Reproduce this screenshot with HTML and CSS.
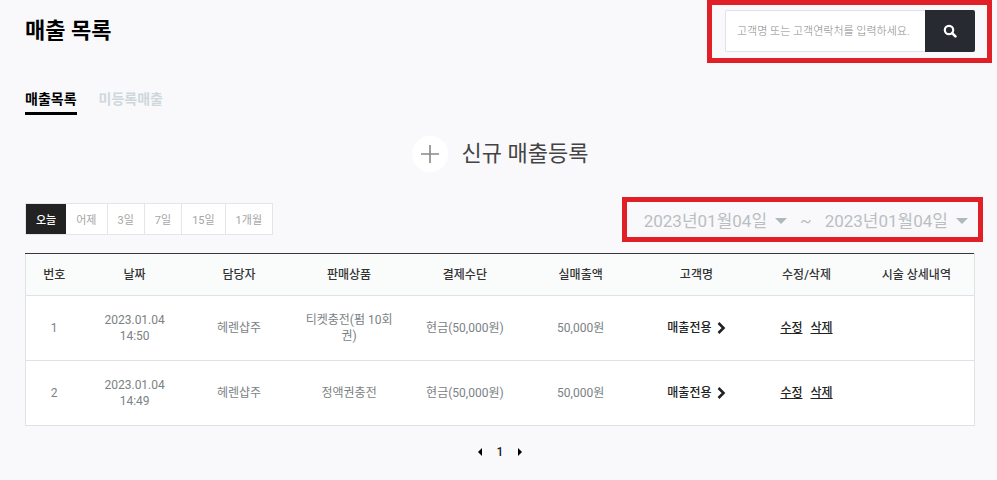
FILE: index.html
```html
<!DOCTYPE html>
<html lang="ko">
<head>
    <meta charset="UTF-8">
    <meta name="viewport" content="width=device-width, initial-scale=1.0">
    <title>매출 목록</title>
    <link rel="stylesheet" href="styles.css">
</head>
<body>
    <header class="page-header">
        <h1>매출 목록</h1>
        <form class="search marked">
            <input type="text" class="search-input" aria-label="고객 검색" placeholder="고객명 또는 고객연락처를 입력하세요.">
            <button type="button" class="search-btn" aria-label="검색">
                <svg width="14" height="14" viewBox="0 0 14 14"><circle cx="6" cy="6" r="4.2" fill="none" stroke="#fff" stroke-width="2.2"/><path d="M9.2 9.2L12.4 12.4" stroke="#fff" stroke-width="2.6" stroke-linecap="round"/></svg>
            </button>
        </form>
    </header>

    <nav class="tabs">
        <a href="#" class="tab active">매출목록</a>
        <a href="#" class="tab">미등록매출</a>
    </nav>

    <button type="button" class="new-sale">
        <span class="plus"><svg width="18" height="18" viewBox="0 0 18 18"><path d="M9 0V18M0 9H18" stroke="#888" stroke-width="1.6"/></svg></span>
        신규 매출등록
    </button>

    <div class="filters">
        <div class="ranges">
            <button type="button" class="range active">오늘</button>
            <button type="button" class="range">어제</button>
            <button type="button" class="range">3일</button>
            <button type="button" class="range">7일</button>
            <button type="button" class="range">15일</button>
            <button type="button" class="range">1개월</button>
        </div>
        <div class="dates marked">
            <button type="button" class="date">2023년01월04일 <span class="caret"></span></button>
            <span>~</span>
            <button type="button" class="date">2023년01월04일 <span class="caret"></span></button>
        </div>
    </div>

    <table class="sales">
        <colgroup>
            <col class="col-no">
            <col class="col-mid">
            <col class="col-mid">
            <col>
            <col>
            <col>
            <col>
            <col class="col-mid">
            <col>
        </colgroup>
        <thead>
            <tr>
                <th>번호</th>
                <th>날짜</th>
                <th>담당자</th>
                <th>판매상품</th>
                <th>결제수단</th>
                <th>실매출액</th>
                <th>고객명</th>
                <th>수정/삭제</th>
                <th>시술 상세내역</th>
            </tr>
        </thead>
        <tbody>
            <tr>
                <td>1</td>
                <td>2023.01.04<br>14:50</td>
                <td>헤렌샵주</td>
                <td>티켓충전(펌 10회권)</td>
                <td>현금(50,000원)</td>
                <td>50,000원</td>
                <td><a href="#" class="customer">매출전용 <svg width="9" height="12" viewBox="0 0 9 12"><path d="M1.5 1L6.5 6L1.5 11" fill="none" stroke="#222" stroke-width="2.6"/></svg></a></td>
                <td><div class="actions"><a href="#">수정</a><a href="#">삭제</a></div></td>
                <td></td>
            </tr>
            <tr>
                <td>2</td>
                <td>2023.01.04<br>14:49</td>
                <td>헤렌샵주</td>
                <td>정액권충전</td>
                <td>현금(50,000원)</td>
                <td>50,000원</td>
                <td><a href="#" class="customer">매출전용 <svg width="9" height="12" viewBox="0 0 9 12"><path d="M1.5 1L6.5 6L1.5 11" fill="none" stroke="#222" stroke-width="2.6"/></svg></a></td>
                <td><div class="actions"><a href="#">수정</a><a href="#">삭제</a></div></td>
                <td></td>
            </tr>
        </tbody>
    </table>

    <nav class="pagination">
        <a href="#" aria-label="이전"><svg width="4" height="8" viewBox="0 0 4 8"><path d="M4 0V8L0 4Z"/></svg></a>
        <a href="#">1</a>
        <a href="#" aria-label="다음"><svg width="4" height="8" viewBox="0 0 4 8"><path d="M0 0V8L4 4Z"/></svg></a>
    </nav>
</body>
</html>
```
FILE: styles.css
```css
* {
    box-sizing: border-box;
}
body {
    margin: 0;
    padding: 10px 22px 16px 25px;
    background: #f9f9fb;
    color: #222;
    font-family: Roboto, "Noto Sans CJK KR", sans-serif;
    font-size: 12px;
    line-height: 16px;
}
a {
    color: inherit;
    text-decoration: none;
}
button {
    padding: 0;
    border: none;
    background: none;
    color: inherit;
    font-family: inherit;
    cursor: pointer;
}
svg {
    display: block;
}
.page-header {
    display: flex;
    justify-content: space-between;
    align-items: center;
}
h1 {
    margin: 0;
    color: #000;
    font-size: 22px;
    line-height: 32px;
    font-weight: 700;
}
/* red highlight box around a control */
.marked {
    position: relative;
}
.marked::after {
    content: "";
    position: absolute;
    border: 5px solid #e01f26;
    pointer-events: none;
}
.search {
    display: flex;
    width: 250px;
    height: 42px;
}
.search::after {
    inset: -10px -17px -11px -18px;
}
.search-input {
    flex: 1;
    min-width: 0;
    padding: 0 11px;
    border: 1px solid #dfe2e6;
    border-right: none;
    border-radius: 2px 0 0 2px;
    background: #fff;
    font-family: inherit;
    font-size: 11px;
    font-weight: 300;
}
.search-input::placeholder {
    color: #888;
}
.search-btn {
    display: flex;
    justify-content: center;
    align-items: center;
    width: 50px;
    border-radius: 0 2px 2px 0;
    background: #272a31;
}
.tabs {
    display: flex;
    gap: 22px;
    margin-top: 35px;
}
.tab {
    height: 28px;
    color: #ced8db;
    font-size: 14px;
    line-height: 24px;
    font-weight: 700;
}
.tab.active {
    border-bottom: 3px solid #000;
    color: #000;
}
.new-sale {
    display: flex;
    align-items: center;
    gap: 14px;
    margin: 21px auto 0;
    color: #444;
    font-size: 22px;
    line-height: 36px;
    font-weight: 400;
}
.plus {
    display: flex;
    justify-content: center;
    align-items: center;
    width: 36px;
    height: 36px;
    border-radius: 50%;
    background: #fff;
}
.filters {
    display: flex;
    justify-content: space-between;
    align-items: center;
    margin-top: 31px;
}
.ranges {
    display: flex;
    height: 32px;
    border: 1px solid #e3e6e8;
    background: #fff;
}
.range {
    padding: 0 10px;
    border-right: 1px solid #e3e6e8;
    color: #a5a5a5;
    font-size: 11px;
}
.range:last-child {
    border-right: none;
}
.range.active {
    border-right: none;
    background: #222;
    color: #fff;
    font-weight: 500;
}
.dates {
    display: flex;
    align-items: center;
    gap: 13px;
    margin-top: 4px;
    margin-right: 7px;
    color: #b9bfc1;
    font-size: 17px;
}
.dates::after {
    inset: -12px -15px -9px -22px;
}
.date {
    display: flex;
    align-items: center;
    gap: 8px;
    font-size: 17px;
    line-height: 24px;
}
.caret {
    border: 6px solid transparent;
    border-top-color: #b0b8b9;
    border-bottom: none;
}
.sales {
    width: 100%;
    margin-top: 18px;
    border: 1px solid #dde3e6;
    border-top: 1px solid #34383c;
    border-collapse: collapse;
    table-layout: fixed;
    background: #fff;
    text-align: center;
}
.col-no {
    width: 6%;
}
.col-mid {
    width: 11%;
}
.sales th {
    height: 42px;
    padding: 0;
    background: #fafcfc;
    color: #333;
    font-weight: 500;
}
.sales td {
    height: 65px;
    padding: 0 12px;
    border-top: 1px solid #dde3e6;
    color: #7b8284;
    font-weight: 400;
}
.customer {
    display: flex;
    justify-content: center;
    align-items: center;
    gap: 5px;
    color: #222;
    font-weight: 500;
}
.actions {
    display: flex;
    justify-content: center;
    gap: 8px;
    color: #222;
    font-weight: 500;
}
.actions a {
    text-decoration: underline;
}
.pagination {
    display: flex;
    justify-content: center;
    align-items: center;
    gap: 15px;
    margin-top: 18px;
    color: #222;
    font-weight: 500;
}
```
